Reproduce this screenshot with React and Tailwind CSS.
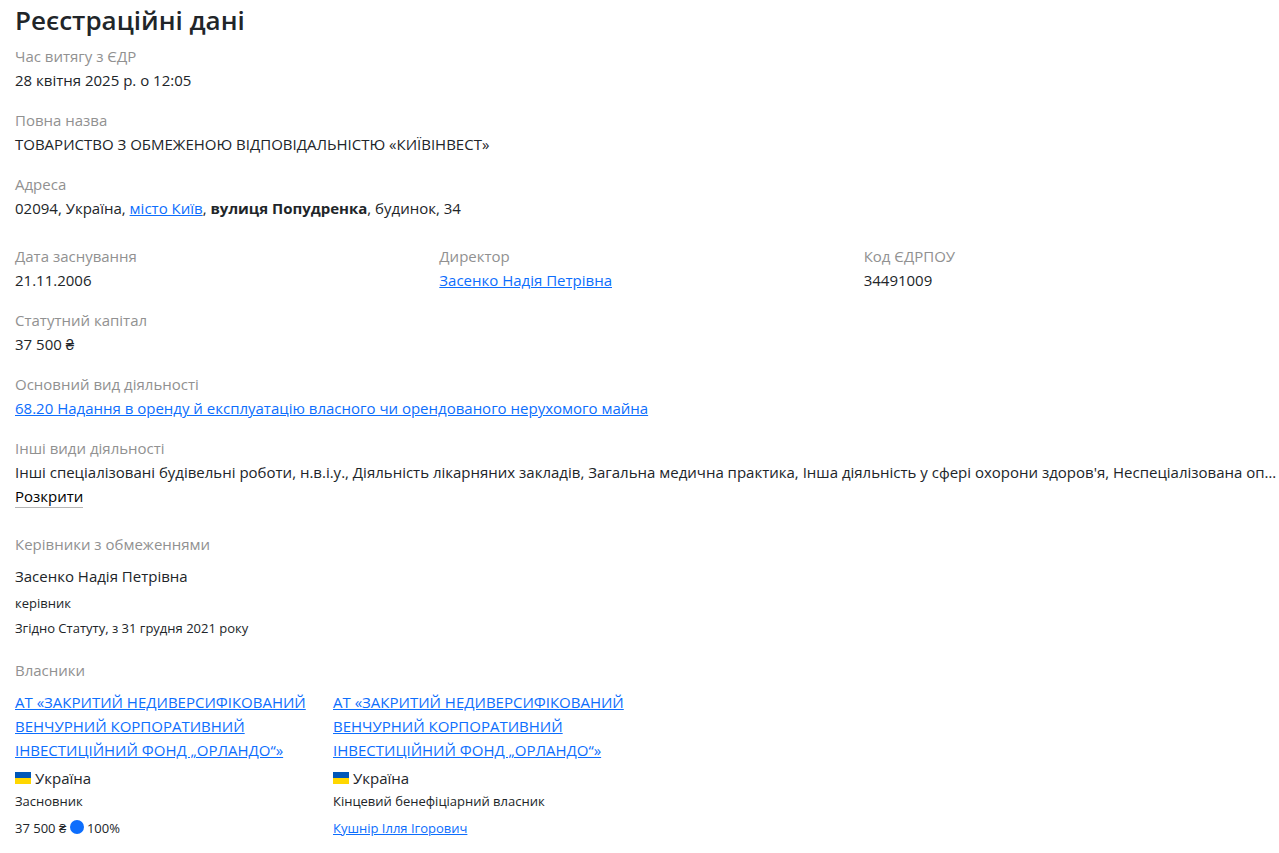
const link = "text-[#0d6efd] underline";

function Field({ label, children, className = "" }) {
  return (
    <div className={className}>
      <dt className="text-[#919191]">{label}</dt>
      <dd>{children}</dd>
    </div>
  );
}

function Flag() {
  return (
    <svg className="mr-1 inline-block h-3 w-4 align-baseline" viewBox="0 0 16 12" aria-hidden="true">
      <rect width="16" height="6" fill="#0057b8" />
      <rect y="6" width="16" height="6" fill="#ffd700" />
    </svg>
  );
}

function Owner({ role, children }) {
  return (
    <li className="w-[302px]">
      <a href="#fund" className={link}>
        АТ «ЗАКРИТИЙ НЕДИВЕРСИФІКОВАНИЙ ВЕНЧУРНИЙ КОРПОРАТИВНИЙ ІНВЕСТИЦІЙНИЙ ФОНД „ОРЛАНДО“»
      </a>
      <div className="mt-1">
        <Flag />
        Україна
      </div>
      <div className="text-[13px] leading-[23px]">{role}</div>
      <div className="mt-[5px] text-[13px] leading-[21px]">{children}</div>
    </li>
  );
}

export default function App() {
  return (
    <main className="px-[15px] pt-1 pb-3 font-['Open_Sans',sans-serif] text-[15px] leading-6 text-[#212529]">
      <h1 className="mb-2 text-[26px] leading-8 font-semibold">Реєстраційні дані</h1>
      <dl>
        <Field label="Час витягу з ЄДР" className="mb-4">28 квітня 2025 р. о 12:05</Field>
        <Field label="Повна назва" className="mb-4">ТОВАРИСТВО З ОБМЕЖЕНОЮ ВІДПОВІДАЛЬНІСТЮ «КИЇВІНВЕСТ»</Field>
        <Field label="Адреса" className="mb-6">
          02094, Україна, <a href="#kyiv" className={link}>місто Київ</a>, <b>вулиця Попудренка</b>, будинок, 34
        </Field>
        <div className="mb-4 grid grid-cols-3 gap-x-6">
          <Field label="Дата заснування">21.11.2006</Field>
          <Field label="Директор"><a href="#director" className={link}>Засенко Надія Петрівна</a></Field>
          <Field label="Код ЄДРПОУ">34491009</Field>
        </div>
        <Field label="Статутний капітал" className="mb-4">37 500 ₴</Field>
        <Field label="Основний вид діяльності" className="mb-4">
          <a href="#activity" className={link}>68.20 Надання в оренду й експлуатацію власного чи орендованого нерухомого майна</a>
        </Field>
        <Field label="Інші види діяльності" className="mb-6">
          <p className="-mr-[13px] truncate">
            Інші спеціалізовані будівельні роботи, н.в.і.у., Діяльність лікарняних закладів, Загальна медична практика, Інша діяльність у сфері охорони здоров'я, Неспеціалізована оптова торгівля
          </p>
          <button type="button" className="mt-0.5 block border-b border-[#b5b5b5] leading-[21px] text-black">Розкрити</button>
        </Field>
      </dl>
      <section>
        <h2 className="mb-2 text-[#919191]">Керівники з обмеженнями</h2>
        <p>Засенко Надія Петрівна</p>
        <p className="mt-[5px] text-[13px] leading-[21px]">керівник</p>
        <p className="mt-1 text-[13px] leading-[21px]">Згідно Статуту, з 31 грудня 2021 року</p>
      </section>
      <section className="mt-[19px]">
        <h2 className="mb-2 text-[#919191]">Власники</h2>
        <ul className="flex flex-wrap gap-4">
          <Owner role="Засновник">
            37 500 ₴ <svg className="inline-block size-3.5 align-[-1px]" viewBox="0 0 14 14" aria-hidden="true"><circle cx="7" cy="7" r="7" fill="#0d6efd" /></svg> 100%
          </Owner>
          <Owner role="Кінцевий бенефіціарний власник">
            <a href="#beneficiary" className={link}>Кушнір Ілля Ігорович</a>
          </Owner>
        </ul>
      </section>
    </main>
  );
}
